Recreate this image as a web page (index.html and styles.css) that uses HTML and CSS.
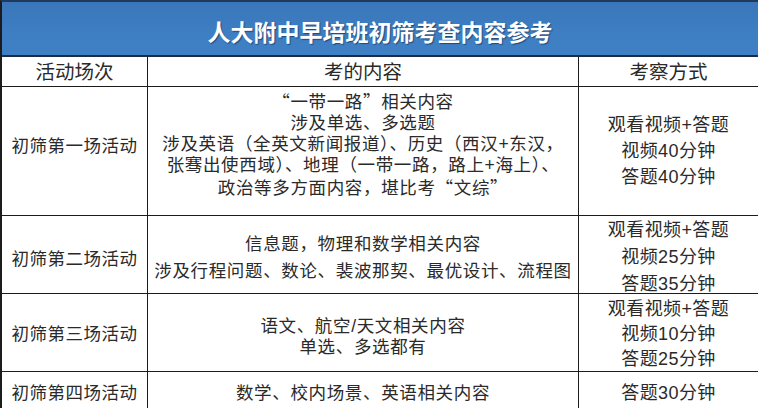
FILE: index.html
```html
<!DOCTYPE html>
<html lang="zh-CN">
<head>
<meta charset="utf-8">
<title>人大附中早培班初筛考查内容参考</title>
<link rel="stylesheet" href="styles.css">
</head>
<body>
<div class="sheet">
  <div class="cell title">人大附中早培班初筛考查内容参考</div>

  <div class="cell head">活动场次</div>
  <div class="cell head">考的内容</div>
  <div class="cell head last">考察方式</div>

  <div class="cell name r1-lift">初筛第一场活动</div>
  <div class="cell content lh21 r1-lift">
    <span><span class="q">“</span>一带一路<span class="q">”</span>相关内容</span>
    <span>涉及单选、多选题</span>
    <span>涉及英语（全英文新闻报道）、历史（西汉+东汉，</span>
    <span>张骞出使西域）、地理（一带一路，路上+海上）、</span>
    <span>政治等多方面内容，堪比考<span class="q">“</span>文综<span class="q">”</span></span>
  </div>
  <div class="cell mode lh26 last">
    <span>观看视频+答题</span>
    <span>视频40分钟</span>
    <span>答题40分钟</span>
  </div>

  <div class="cell name r2-drop">初筛第二场活动</div>
  <div class="cell content lh27 r2-drop">
    <span>信息题，物理和数学相关内容</span>
    <span>涉及行程问题、数论、裴波那契、最优设计、流程图</span>
  </div>
  <div class="cell mode lh27 r2-drop last">
    <span>观看视频+答题</span>
    <span>视频25分钟</span>
    <span>答题35分钟</span>
  </div>

  <div class="cell name">初筛第三场活动</div>
  <div class="cell content lh21 r3-drop">
    <span>语文、航空/天文相关内容</span>
    <span>单选、多选都有</span>
  </div>
  <div class="cell mode lh25 r3-mode last">
    <span>观看视频+答题</span>
    <span>视频10分钟</span>
    <span>答题25分钟</span>
  </div>

  <div class="cell name r4">初筛第四场活动</div>
  <div class="cell content r4">数学、校内场景、英语相关内容</div>
  <div class="cell mode r4 last">答题30分钟</div>
</div>
</body>
</html>
```

FILE: styles.css
```css
html, body {
  margin: 0;
  padding: 0;
  background: #ffffff;
}

body {
  font-family: "Liberation Sans", "Noto Sans CJK SC", sans-serif;
  color: #2a2a2a;
}

.sheet {
  display: grid;
  grid-template-columns: 146px 431px 181px;
  grid-template-rows: 55px 30px 129px 78px 78px 37px;
  width: 758px;
  box-sizing: border-box;
  border-left: 2px solid #1c1c1c;
  border-top: 2px solid #1f3a5c;
}

.cell {
  box-sizing: border-box;
  border-right: 1px solid #1c1c1c;
  border-bottom: 1px solid #1c1c1c;
  display: flex;
  flex-direction: column;
  align-items: center;
  justify-content: center;
  text-align: center;
  white-space: nowrap;
  min-width: 0;
}

.cell.last {
  border-right-width: 2px;
}

.title {
  grid-column: 1 / span 3;
  background: linear-gradient(180deg, #3a76ba 0%, #3e7ec3 60%, #3f80c5 100%);
  color: #ffffff;
  font-family: "Noto Sans CJK SC", sans-serif;
  font-weight: 700;
  font-size: 23px;
  text-shadow: 1px 1px 1px rgba(10, 30, 60, 0.55);
  border-right: 2px solid #1f3a5c;
  border-bottom: 2px solid #1c2c44;
  padding-top: 4px;
}

.head {
  font-size: 19.5px;
  line-height: 28px;
}

.name {
  font-size: 17.5px;
  letter-spacing: 0.5px;
}

.content {
  font-size: 17.5px;
  letter-spacing: 0.65px;
}

.mode {
  font-size: 18px;
  letter-spacing: 0.4px;
}

.q {
  font-family: "Noto Sans CJK SC", sans-serif;
}

.lh21 { line-height: 21px; }
.lh25 { line-height: 25px; }
.lh26 { line-height: 26px; }
.lh27 { line-height: 27px; }

.r1-lift { padding-bottom: 14px; }
.r2-drop { padding-top: 6px; }
.r3-drop { padding-top: 8px; }
.r3-mode { padding-top: 4px; }
.r4 { padding-top: 2px; }
```
